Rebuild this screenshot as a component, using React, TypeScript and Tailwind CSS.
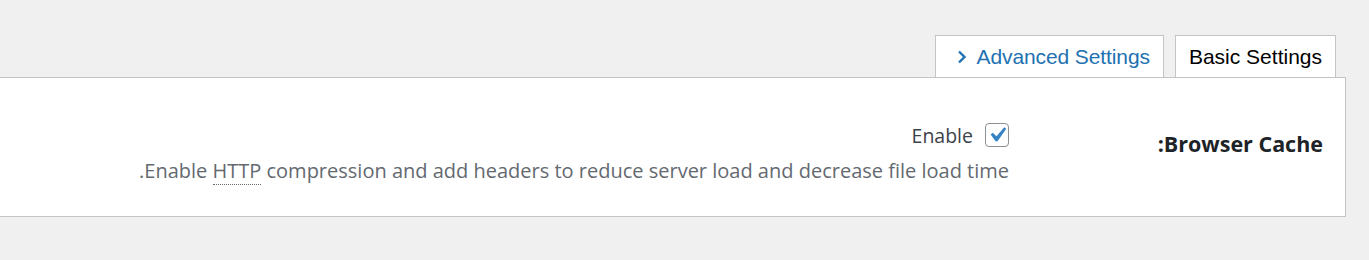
import React from "react";

const CheckIcon = () => (
  <svg viewBox="0 0 20 20" className="w-[30px] h-[30px] -m-[4px]" fill="#3582c4">
    <path d="M14.83 4.89l1.34.94-5.81 8.38H9.02L5.78 9.67l1.34-1.25 2.57 2.4z" />
  </svg>
);

const Chevron = () => (
  <svg viewBox="0 0 10 14" className="w-[10px] h-[14px]" fill="none" stroke="#2271b1" strokeWidth="2.4">
    <polyline points="2,1.5 7.5,7 2,12.5" />
  </svg>
);

export default function App() {
  return (
    <div dir="rtl" className="bg-[#f0f0f1] h-[260px] pt-[35px] pr-[23px] font-['Liberation_Sans',Arial,sans-serif]">
      {/* Tabs */}
      <div className="flex gap-[11px] pr-[10px] relative z-10 -mb-px">
        <button className="h-[43px] px-[13px] bg-white border border-[#c3c4c7] text-[21px] text-black leading-none">
          Basic Settings
        </button>
        <button className="h-[43px] pr-[13px] pl-[21px] bg-white border border-[#c3c4c7] text-[21px] tracking-[-0.1px] text-[#2271b1] leading-none flex items-center gap-[10px]">
          <span>Advanced Settings</span>
          <Chevron />
        </button>
      </div>

      {/* Panel */}
      <div className="bg-white border border-l-0 border-[#c3c4c7] h-[140px] flex font-['Segoe_UI','Open_Sans',sans-serif]">
        <div className="w-[336px] pr-[22px] pt-[52px]">
          <span className="text-[21.5px] leading-[28px] font-bold text-[#1d2327]">Browser Cache:</span>
        </div>
        <div className="flex flex-col items-start pt-[45px]">
          <label className="flex items-center gap-[12px] h-[26px]">
            <span className="w-[24px] h-[24px] -mt-[2px] border border-[#8c8f94] rounded-[4px] bg-white flex items-center justify-center">
              <CheckIcon />
            </span>
            <span className="text-[19.5px] text-[#3c434a]">Enable</span>
          </label>
          <p className="mt-[8px] text-[20px] leading-[28px] text-[#646970]">
            Enable <abbr title="Hypertext Transfer Protocol" className="no-underline border-b border-dotted border-[#646970]">HTTP</abbr> compression and add headers to reduce server load and decrease file load time.
          </p>
        </div>
      </div>
    </div>
  );
}
